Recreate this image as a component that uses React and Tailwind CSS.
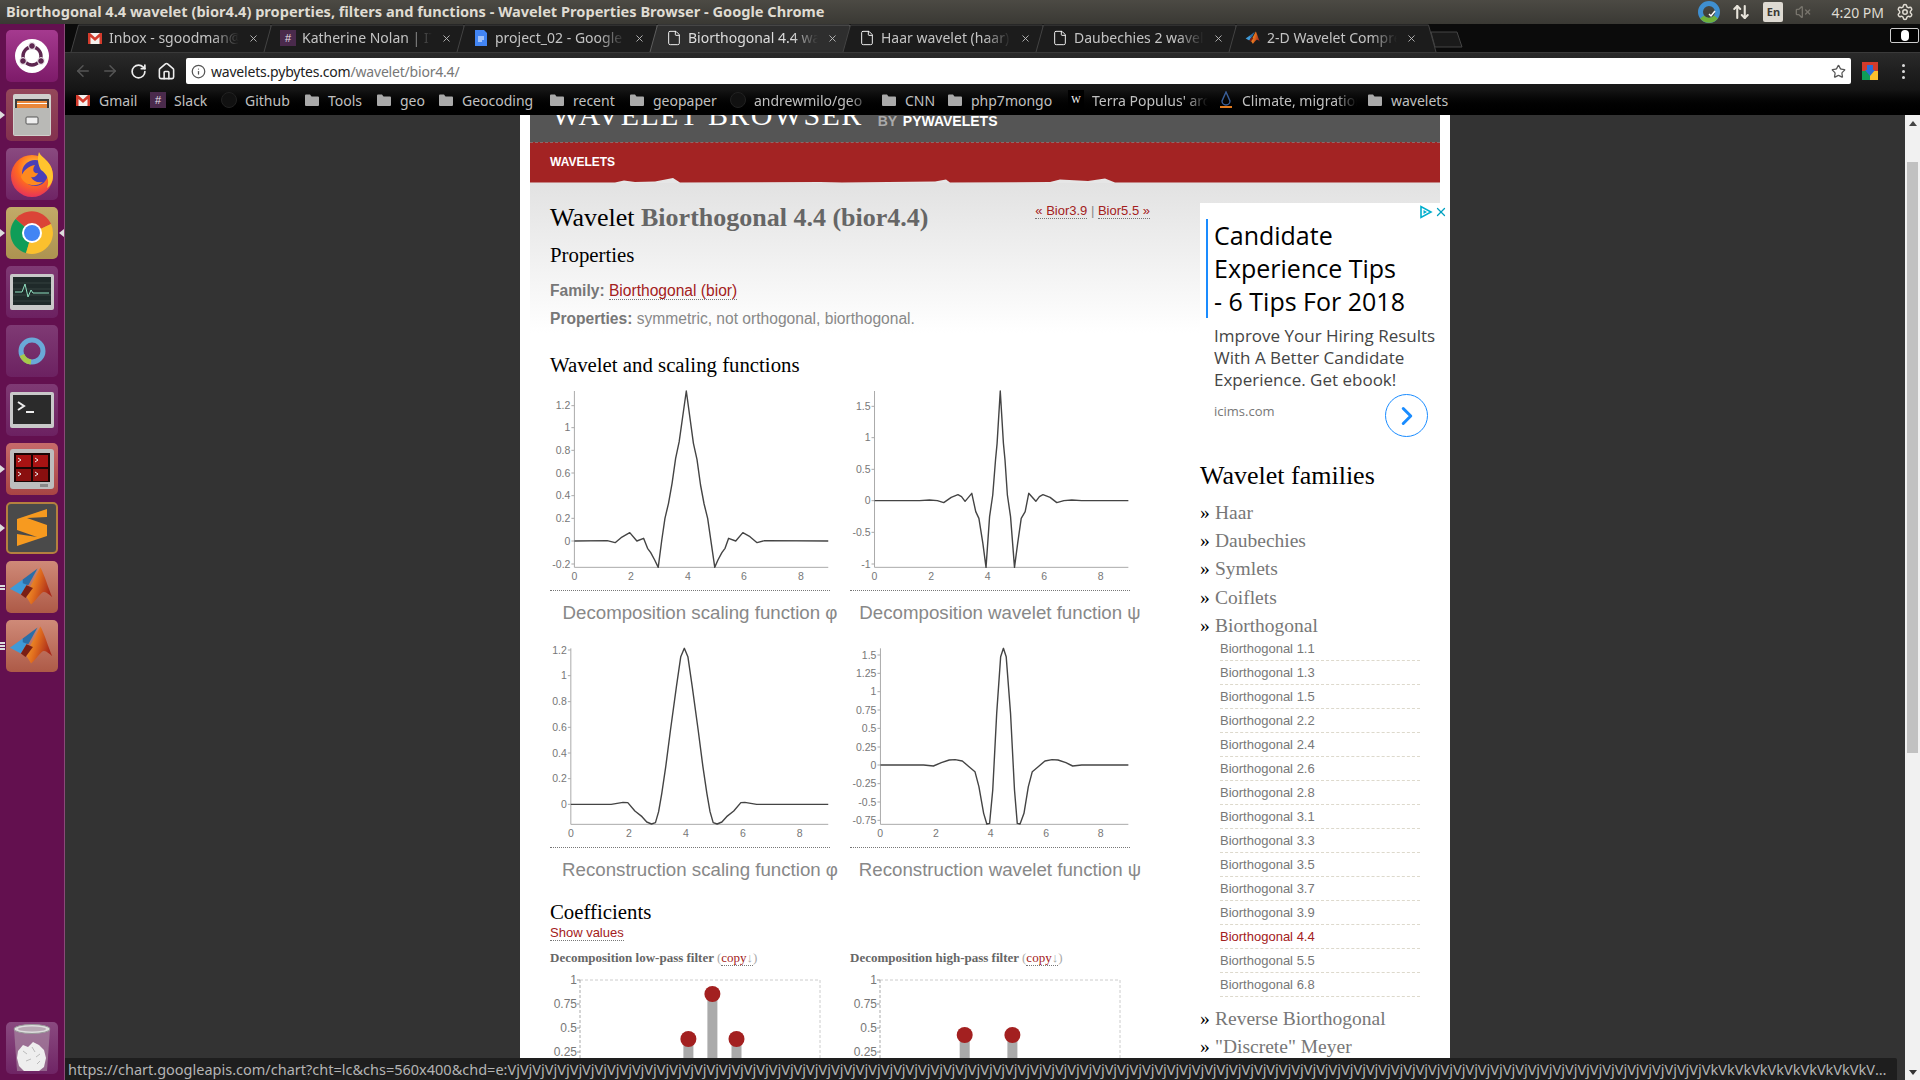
import { ArrowLeft, ArrowRight, RotateCw, Home, Info, Star, X, File, ChevronRight, VolumeX, ArrowUpDown, Settings } from 'lucide-react';

const UI = "font-['Noto_Sans',sans-serif]";

const TABS = [
  { title: 'Inbox - sgoodman@gmail.com', icon: 'gmail' },
  { title: 'Katherine Nolan | IT Recruiter', icon: 'slack' },
  { title: 'project_02 - Google Docs', icon: 'doc' },
  { title: 'Biorthogonal 4.4 wavelet (bior4.4)', icon: 'file', active: true },
  { title: 'Haar wavelet (haar)', icon: 'file' },
  { title: 'Daubechies 2 wavelet (db2)', icon: 'file' },
  { title: '2-D Wavelet Compression', icon: 'matlab' },
];

const BOOKMARKS = [
  { label: 'Gmail', icon: 'gmail', w: 'w-[75px]' },
  { label: 'Slack', icon: 'slack', w: 'w-[71px]' },
  { label: 'Github', icon: 'github', w: 'w-[83px]' },
  { label: 'Tools', icon: 'folder', w: 'w-[72px]' },
  { label: 'geo', icon: 'folder', w: 'w-[62px]' },
  { label: 'Geocoding', icon: 'folder', w: 'w-[111px]' },
  { label: 'recent', icon: 'folder', w: 'w-[80px]' },
  { label: 'geopaper', icon: 'folder', w: 'w-[101px]' },
  { label: 'andrewmilo/geo', icon: 'github', w: 'w-[151px]', fade: true },
  { label: 'CNN', icon: 'folder', w: 'w-[66px]' },
  { label: 'php7mongo', icon: 'folder', w: 'w-[121px]' },
  { label: "Terra Populus' archive", icon: 'w', w: 'w-[150px]', fade: true },
  { label: 'Climate, migration', icon: 'climate', w: 'w-[149px]', fade: true },
  { label: 'wavelets', icon: 'folder', w: 'w-[90px]' },
];

const SUB = ['1.1', '1.3', '1.5', '2.2', '2.4', '2.6', '2.8', '3.1', '3.3', '3.5', '3.7', '3.9', '4.4', '5.5', '6.8'];

// curves are read off the reference at zoom scale, Plot converts them
const CURVE_1 = [[87,483],[170,482],[190,488],[205,473],[227,458],[245,483],[262,475],[272,505],[280,518],[290,540],[299,562],[308,480],[316,415],[325,370],[334,310],[343,235],[352,185],[370,33],[388,190],[397,238],[406,315],[415,372],[424,415],[442,562],[450,540],[460,518],[468,505],[477,475],[495,483],[513,458],[531,470],[549,488],[568,482],[729,483]];
const CURVE_2 = [[846,362],[960,362],[985,360],[1005,362],[1021,368],[1040,352],[1057,344],[1066,350],[1075,364],[1092,340],[1102,395],[1110,415],[1120,490],[1128,562],[1137,410],[1145,345],[1152,240],[1156,190],[1164,33],[1172,190],[1176,240],[1182,345],[1190,410],[1200,562],[1208,490],[1217,415],[1227,395],[1236,340],[1254,364],[1263,350],[1272,344],[1290,352],[1307,368],[1325,362],[1345,360],[1370,362],[1488,362]];
const CURVE_3 = [[78,523],[180,523],[195,520],[210,517],[222,518],[240,543],[258,560],[270,576],[282,582],[292,578],[300,545],[308,490],[318,410],[330,300],[345,170],[356,80],[365,55],[374,80],[385,170],[400,300],[412,410],[422,490],[430,545],[438,578],[448,582],[460,576],[472,560],[490,543],[508,518],[518,517],[533,520],[548,523],[729,523]];
const CURVE_4 = [[861,405],[970,405],[995,408],[1015,398],[1035,390],[1050,389],[1068,393],[1085,410],[1100,425],[1110,470],[1122,550],[1130,582],[1137,580],[1145,480],[1155,250],[1165,80],[1172,55],[1179,80],[1190,250],[1200,480],[1207,580],[1214,582],[1224,550],[1235,470],[1245,425],[1260,410],[1277,393],[1295,389],[1310,390],[1330,398],[1347,408],[1370,405],[1488,405]];

function Plot({ offsetX, offsetY, h, axis, right, top, bottom, yTicks, xTicks, curve }) {
  const px = (z) => z / 2.529 - offsetX;
  const py = (z) => z / 3 - offsetY;
  return (
    <svg width="280" height={h} className="block font-['Liberation_Sans',sans-serif]">
      <polyline points={`${px(axis)},${py(top)} ${px(axis)},${py(bottom)} ${px(right)},${py(bottom)}`} fill="none" stroke="#aaa" />
      {yTicks.map(([label, z]) => (
        <g key={label}>
          <line x1={px(axis) - 3} x2={px(axis)} y1={py(z)} y2={py(z)} stroke="#aaa" />
          <text x={px(axis) - 4} y={py(z) + 3.5} fontSize="10.5" textAnchor="end" fill="#777">{label}</text>
        </g>
      ))}
      {xTicks.map(([label, z]) => (
        <text key={label} x={px(z)} y={py(bottom) + 13} fontSize="10.5" textAnchor="middle" fill="#777">{label}</text>
      ))}
      <polyline points={curve.map(([x, y]) => `${px(x)},${py(y)}`).join(' ')} fill="none" stroke="#444" strokeWidth="1.4" strokeLinejoin="round" />
    </svg>
  );
}

function Lollipops({ dots }) {
  return (
    <svg width="280" height="100" className="block font-['Liberation_Sans',sans-serif]">
      <path d="M30 10H270V100" fill="none" stroke="#ccc" strokeDasharray="3 2" />
      <path d="M30 10V100" fill="none" stroke="#aaa" strokeDasharray="3 2" />
      {[['1', 10], ['0.75', 34], ['0.5', 58], ['0.25', 82]].map(([label, y]) => (
        <g key={label}>
          <line x1="27" x2="30" y1={y} y2={y} stroke="#999" />
          <text x="27" y={y + 4} fontSize="12" textAnchor="end" fill="#777">{label}</text>
        </g>
      ))}
      {dots.map(([x, y]) => (
        <g key={x}>
          <rect x={x - 5} y={y} width="10" height={100 - y} fill="#aaa" />
          <circle cx={x} cy={y} r="8" fill="#a32020" />
        </g>
      ))}
    </svg>
  );
}

function Caption({ children, className }) {
  return <p className={`w-[300px] text-center text-[18.7px] leading-6 text-[#888] whitespace-nowrap ${className}`}>{children}</p>;
}

function FilterLabel({ children }) {
  return (
    <p className="font-['Liberation_Serif',serif] font-bold text-[13px] leading-4 text-[#666] whitespace-nowrap">
      {children} <span className="font-normal text-[#aaa]">(<span className="text-[#a32020] border-b border-dotted border-[#777]">copy<span className="text-[#aaa]">↓</span></span>)</span>
    </p>
  );
}

function Gmail() {
  return (
    <svg width="16" height="16" viewBox="0 0 16 16" className="shrink-0">
      <rect x="1" y="3" width="14" height="11" fill="#f4f1ee" />
      <path d="M1 3h2l5 4.5L13 3h2v11h-2.5V7L8 11 3.5 7v7H1z" fill="#d33b2c" />
    </svg>
  );
}

function SlackIcon() {
  return (
    <div className="w-4 h-4 shrink-0 bg-[#4a2a4c] flex items-center justify-center text-[11px] leading-none text-[#e8e0e8] font-['Liberation_Sans',sans-serif]">#</div>
  );
}

function DocIcon() {
  return (
    <svg width="16" height="16" viewBox="0 0 16 16" className="shrink-0">
      <path d="M2 0h9l3 3v13H2z" fill="#4285f4" />
      <path d="M5 7h6M5 9h6M5 11h4" stroke="#fff" />
    </svg>
  );
}

function Matlab({ size = 16 }) {
  return (
    <svg width={size} height={size} viewBox="0 0 52 52" className="shrink-0">
      <defs>
        <linearGradient id="mlOrange" x1="0" y1="0" x2="1" y2="0.4">
          <stop offset="0" stopColor="#f4b23a" />
          <stop offset="0.5" stopColor="#e2701f" />
          <stop offset="1" stopColor="#a8281a" />
        </linearGradient>
      </defs>
      <path d="M2 28l14-10 9-2-11 18z" fill="#3f9ad8" />
      <path d="M16 18L32 6 22 24l-6-2z" fill="#2a6ea8" />
      <path d="M24 26L35 5c4 6 9 24 13 32-5-4-8-8-12-4-5 5-7 9-11 12l-6-10z" fill="url(#mlOrange)" />
      <path d="M20 24l7 3-8 11-5-4z" fill="#7a1f15" />
    </svg>
  );
}

function Folder() {
  return (
    <svg width="16" height="16" viewBox="0 0 16 16" className="shrink-0">
      <path d="M1 3.5A1 1 0 0 1 2 2.5h4l1.5 2H14a1 1 0 0 1 1 1V13a1 1 0 0 1-1 1H2a1 1 0 0 1-1-1z" fill="#aaa" />
    </svg>
  );
}

function BookmarkIcon({ kind }) {
  if (kind === 'gmail') return <Gmail />;
  if (kind === 'slack') return <SlackIcon />;
  if (kind === 'folder') return <Folder />;
  if (kind === 'github') return <div className="w-4 h-4 shrink-0 rounded-full border border-[#222] bg-[#111]" />;
  if (kind === 'w') return <div className="w-4 h-5 shrink-0 bg-black text-[10px] leading-5 text-center text-white font-['Liberation_Serif',serif]">W</div>;
  return (
    <svg width="16" height="18" viewBox="0 0 16 18" className="shrink-0">
      <path d="M8 1L4 10a4 4 0 0 0 8 0z" fill="none" stroke="#3a5f9a" strokeWidth="1.4" />
      <path d="M2 16h12" stroke="#e07a1f" strokeWidth="2" />
    </svg>
  );
}

function Tab({ title, icon, active }) {
  return (
    <div className="relative w-[193px] h-[28px] shrink-0 flex items-center">
      <svg width="209" height="28" className="absolute left-0 top-0">
        <path d="M1 28L8.5 1H200.5L208 28" fill={active ? '#2e2e2e' : '#1c1c1c'} stroke={active ? '#5e5e5e' : '#444'} />
      </svg>
      <div className="relative flex items-center pl-[17px] w-full">
        {icon === 'file' && <File size={16} strokeWidth={1.4} color="#fff" className="shrink-0" />}
        {icon === 'gmail' && <Gmail />}
        {icon === 'slack' && <SlackIcon />}
        {icon === 'doc' && <DocIcon />}
        {icon === 'matlab' && <Matlab />}
        <span className={`ml-[6px] w-[130px] overflow-hidden whitespace-nowrap text-[14px] leading-5 [mask-image:linear-gradient(to_right,black_80%,transparent)] ${active ? 'text-[#ddd]' : 'text-[#c4c4c4]'}`}>{title}</span>
        <X size={11} strokeWidth={2} color="#bbb" className="ml-[9px] shrink-0" />
      </div>
    </div>
  );
}

function Tile({ className, pip, pipRight, children }) {
  return (
    <div className="relative h-[52px] pl-[6px]">
      {pip > 0 && (
        <div className="absolute left-0 top-0 h-full flex flex-col justify-center gap-[1px]">
          {pip === 1 ? (
            <div className="w-0 h-0 border-y-[4px] border-y-transparent border-l-[5px] border-l-[#ddd]" />
          ) : (
            [...Array(pip)].map((_, i) => <div key={i} className="w-[5px] h-[2px] bg-[#ddd]" />)
          )}
        </div>
      )}
      {pipRight && (
        <div className="absolute right-0 top-[22px] w-0 h-0 border-y-[4px] border-y-transparent border-r-[5px] border-r-[#ddd]" />
      )}
      <div className={`w-[52px] h-[52px] rounded-[5px] flex items-center justify-center ${className}`}>{children}</div>
    </div>
  );
}

function Launcher() {
  return (
    <div className="w-[65px] shrink-0 bg-[#63104f] border-r border-[#8a4a78] flex flex-col gap-[7px] pt-[6px] pb-[6px] overflow-hidden">
      <Tile className="bg-gradient-to-b from-[#a53a8f] to-[#7d1a69]">
        <svg width="36" height="36" viewBox="0 0 36 36">
          <circle cx="18" cy="18" r="17" fill="#fff" />
          <circle cx="18" cy="18" r="9" fill="none" stroke="#5e2750" strokeWidth="3.4" />
          <circle cx="18" cy="8" r="3.4" fill="#5e2750" stroke="#fff" />
          <circle cx="9" cy="23" r="3.4" fill="#5e2750" stroke="#fff" />
          <circle cx="27" cy="23" r="3.4" fill="#5e2750" stroke="#fff" />
        </svg>
      </Tile>
      <Tile pip={1} className="bg-gradient-to-b from-[#94485a] to-[#83314f]">
        <svg width="40" height="44" viewBox="0 0 40 44">
          <rect x="1" y="1" width="38" height="42" rx="2" fill="#d0d0cc" />
          <rect x="3" y="6" width="34" height="10" fill="#3c3c3c" />
          <rect x="5" y="8" width="30" height="7" fill="#e9873a" />
          <rect x="5" y="10" width="30" height="1" fill="#fff" />
          <rect x="2" y="15" width="36" height="27" fill="#b9b9b6" />
          <rect x="14" y="24" width="12" height="7" rx="1" fill="#eee" stroke="#555" />
        </svg>
      </Tile>
      <Tile className="bg-gradient-to-b from-[#8a4a80] to-[#6f2465]">
        <svg width="46" height="46" viewBox="0 0 46 46">
          <defs>
            <radialGradient id="fx" cx="0.55" cy="0.3" r="0.8">
              <stop offset="0" stopColor="#ffd23a" />
              <stop offset="0.5" stopColor="#ff6a1f" />
              <stop offset="1" stopColor="#e0226a" />
            </radialGradient>
          </defs>
          <circle cx="23" cy="25" r="21" fill="url(#fx)" />
          <circle cx="26" cy="22" r="13" fill="#4a3fb8" />
          <path d="M12 26c3 8 14 11 22 5-6 1-10-1-12-5 3 1 6-1 7-4-5 1-6-4-3-8-7 1-12 6-14 12z" fill="#ff8a1f" />
          <path d="M30 1c2 6 14 9 14 24 0 6-3 10-6 12 3-8 0-14-6-18-3-5-4-12-2-18z" fill="#ffc42e" />
        </svg>
      </Tile>
      <Tile pip={1} pipRight className="bg-gradient-to-b from-[#c2aa68] to-[#ad9350]">
        <svg width="44" height="44" viewBox="0 0 44 44">
          <path d="M22 22L5.5 8A21 21 0 0 1 41 13z" fill="#db4437" />
          <path d="M5.5 8A21 21 0 0 0 16 42l6-20z" fill="#0f9d58" />
          <path d="M41 13A21 21 0 0 1 16 42l6-20z" fill="#fbc02d" />
          <circle cx="22" cy="22" r="10" fill="#fff" />
          <circle cx="22" cy="22" r="8" fill="#4285f4" />
        </svg>
      </Tile>
      <Tile className="bg-gradient-to-b from-[#7f3a74] to-[#6c2161]">
        <svg width="46" height="38" viewBox="0 0 46 38">
          <rect x="1" y="1" width="44" height="36" rx="2" fill="#c9c9c9" />
          <rect x="4" y="4" width="38" height="28" fill="#1f2a2a" />
          <path d="M4 10h38M4 16h38M4 22h38M4 28h38" stroke="#34403f" />
          <path d="M6 19h7l3-8 3 13 3-7 2 3h16" fill="none" stroke="#8fe0c0" />
        </svg>
      </Tile>
      <Tile className="bg-gradient-to-b from-[#7f3a74] to-[#6c2161]">
        <svg width="30" height="30" viewBox="0 0 30 30">
          <circle cx="15" cy="15" r="11" fill="none" stroke="#6aa9d8" strokeWidth="5" />
          <path d="M5 19a11 11 0 0 0 9 7" fill="none" stroke="#a8c84a" strokeWidth="5" />
        </svg>
      </Tile>
      <Tile className="bg-gradient-to-b from-[#7f3a74] to-[#6c2161]">
        <svg width="46" height="38" viewBox="0 0 46 38">
          <rect x="1" y="1" width="44" height="36" rx="2" fill="#c9c9c9" />
          <rect x="4" y="4" width="38" height="29" fill="#2b2b2b" />
          <path d="M9 11l6 4-6 4" fill="none" stroke="#eee" strokeWidth="2" />
          <path d="M17 21h8" stroke="#eee" strokeWidth="2" />
        </svg>
      </Tile>
      <Tile pip={1} className="bg-gradient-to-b from-[#c76a6a] to-[#a84444]">
        <svg width="46" height="42" viewBox="0 0 46 42">
          <rect x="1" y="1" width="44" height="40" rx="3" fill="#bdbdbd" />
          <rect x="5" y="5" width="36" height="29" fill="#1a0505" />
          <rect x="7" y="7" width="15" height="12" fill="#a81313" />
          <rect x="24" y="7" width="15" height="12" fill="#a81313" />
          <rect x="7" y="21" width="15" height="12" fill="#8a0f0f" />
          <rect x="24" y="21" width="15" height="12" fill="#8a0f0f" />
          <path d="M9 10l3 2-3 2M26 10l3 2-3 2M9 24l3 2-3 2M26 24l3 2-3 2" fill="none" stroke="#eee" />
          <rect x="31" y="36" width="8" height="3" fill="#888" />
        </svg>
      </Tile>
      <Tile pip={1} className="bg-[#4a4a4a] border-2 border-[#b5803f]">
        <svg width="34" height="40" viewBox="0 0 34 40">
          <path d="M32 1L2 11v11l20 7L2 26v12l30-10V17L12 10l20-1z" fill="#f79a1f" />
        </svg>
      </Tile>
      <Tile pip={2} className="bg-gradient-to-b from-[#cf8a78] to-[#ad5a47]"><Matlab size={48} /></Tile>
      <Tile pip={3} className="bg-gradient-to-b from-[#cf8a78] to-[#ad5a47]"><Matlab size={48} /></Tile>
      <div className="mt-auto">
        <Tile className="bg-gradient-to-b from-[#8a4a80] to-[#6f2465]">
          <svg width="40" height="50" viewBox="0 0 40 50">
            <path d="M2 6l3 42h30l3-42z" fill="#b29aad" fillOpacity="0.55" />
            <path d="M6 28l5-6 5 2 5-5 6 3 5 5 2 8-2 9-5 4H12l-5-5-2-8z" fill="#eee" />
            <path d="M11 28l4 3M20 24l3 5M28 31l-4 3M14 38l5-2M25 41l3-3" stroke="#bbb" fill="none" />
            <ellipse cx="20" cy="6" rx="18" ry="4.5" fill="#ddd" stroke="#999" />
            <ellipse cx="20" cy="6" rx="14" ry="2.5" fill="#b8a8b4" />
          </svg>
        </Tile>
      </div>
    </div>
  );
}

function AdBox() {
  return (
    <div className="relative w-[250px] h-[250px] mt-5 bg-white font-['Open_Sans',sans-serif] overflow-hidden">
      <svg width="14" height="14" viewBox="0 0 14 14" className="absolute left-[219px] top-[2px]">
        <path d="M2 1.5v11L12 7z" fill="none" stroke="#00aecd" strokeWidth="1.6" />
        <path d="M4.5 5v4l3.5-2z" fill="#00aecd" />
      </svg>
      <X size={14} strokeWidth={2.2} color="#00a0c0" className="absolute left-[234px] top-[2px]" />
      <div className="ml-[6px] mt-4 pl-[6px] border-l-2 border-[#1a8cff] text-[25px] leading-[33px] text-black whitespace-nowrap">
        Candidate<br />Experience Tips<br />- 6 Tips For 2018
      </div>
      <p className="ml-[14px] mt-[7px] text-[17px] leading-[22px] text-[#444] whitespace-nowrap">
        Improve Your Hiring Results<br />With A Better Candidate<br />Experience. Get ebook!
      </p>
      <p className="ml-[14px] mt-[11px] text-[13px] leading-[18px] text-[#777]">icims.com</p>
      <div className="absolute left-[185px] top-[191px] w-[43px] h-[43px] rounded-full border border-[#1a8cff] flex items-center justify-center">
        <ChevronRight size={30} strokeWidth={2.4} color="#1a8cff" />
      </div>
    </div>
  );
}

function Family({ name, className = 'h-[28.2px]' }) {
  return (
    <li className={`flex text-[19.5px] leading-7 whitespace-nowrap ${className}`}>
      <span className="w-[15px] text-black shrink-0">»</span>
      <span className="text-[#777]">{name}</span>
    </li>
  );
}

function Sidebar() {
  return (
    <div className="w-[250px] shrink-0 ml-[50px] font-['Liberation_Serif',serif]">
      <AdBox />
      <h3 className="mt-2 text-[26px] leading-[30px] text-black">Wavelet families</h3>
      <ul className="mt-2">
        {['Haar', 'Daubechies', 'Symlets', 'Coiflets'].map((n) => <Family key={n} name={n} />)}
        <Family name="Biorthogonal" className="h-[25px]" />
      </ul>
      <ul className="ml-5 w-[200px] font-['Liberation_Sans',sans-serif] text-[13px]">
        {SUB.map((v) => (
          <li key={v} className={`h-6 flex items-center border-b border-dashed border-[#ddd9cc] ${v === '4.4' ? 'text-[#a32020]' : 'text-[#777]'}`}>
            Biorthogonal {v}
          </li>
        ))}
      </ul>
      <ul className="mt-2">
        <Family name="Reverse Biorthogonal" />
        <Family name={'"Discrete" Meyer'} />
        <Family name="Gaussian" />
      </ul>
    </div>
  );
}

function MainColumn() {
  return (
    <div className="w-[600px] shrink-0 ml-5 font-['Liberation_Sans',sans-serif]">
      <div className="flex justify-between items-start">
        <h1 className="mt-5 font-['Liberation_Serif',serif] text-[26px] leading-[30px] text-black whitespace-nowrap">
          Wavelet <b className="text-[#666]">Biorthogonal 4.4 (bior4.4)</b>
        </h1>
        <p className="mt-5 text-[13px] leading-4 text-[#888] whitespace-nowrap">
          <span className="text-[#a32020] border-b border-dotted border-[#777]">« Bior3.9</span> | <span className="text-[#a32020] border-b border-dotted border-[#777]">Bior5.5 »</span>
        </p>
      </div>
      <h2 className="mt-[10px] font-['Liberation_Serif',serif] text-[20.8px] leading-6 text-black">Properties</h2>
      <p className="mt-[14px] text-[15.6px] leading-5 text-[#777]">
        <b>Family:</b> <span className="text-[#a32020] border-b border-dotted border-[#777]">Biorthogonal (bior)</span>
      </p>
      <p className="mt-2 text-[15.6px] leading-5 text-[#888]">
        <b className="text-[#777]">Properties:</b> symmetric, not orthogonal, biorthogonal.
      </p>
      <h2 className="mt-6 font-['Liberation_Serif',serif] text-[20.8px] leading-6 text-black">Wavelet and scaling functions</h2>

      <div className="mt-2 grid grid-cols-[280px_280px] gap-x-5">
        <div className="border-b border-dotted border-[#777]">
          <Plot offsetX={10} offsetY={5} h={205} axis={87} right={729} top={33} bottom={562} curve={CURVE_1}
            yTicks={[['1.2', 77], ['1', 143], ['0.8', 211], ['0.6', 279], ['0.4', 347], ['0.2', 415], ['0', 483], ['-0.2', 552]]}
            xTicks={[['0', 87], ['2', 230], ['4', 374], ['6', 516], ['8', 660]]} />
        </div>
        <div className="border-b border-dotted border-[#777]">
          <Plot offsetX={310} offsetY={5} h={205} axis={846} right={1488} top={33} bottom={562} curve={CURVE_2}
            yTicks={[['1.5', 79], ['1', 173], ['0.5', 268], ['0', 362], ['-0.5', 457], ['-1', 552]]}
            xTicks={[['0', 846], ['2', 989], ['4', 1132], ['6', 1275], ['8', 1418]]} />
        </div>
        <Caption className="mt-[10px]">Decomposition scaling function φ</Caption>
        <Caption className="mt-[10px]">Decomposition wavelet function ψ</Caption>
      </div>

      <div className="mt-[15px] grid grid-cols-[280px_280px] gap-x-5">
        <div className="border-b border-dotted border-[#777]">
          <Plot offsetX={10} offsetY={10} h={207} axis={78} right={729} top={55} bottom={583} curve={CURVE_3}
            yTicks={[['1.2', 60], ['1', 137], ['0.8', 215], ['0.6', 292], ['0.4', 369], ['0.2', 446], ['0', 523]]}
            xTicks={[['0', 78], ['2', 225], ['4', 369], ['6', 513], ['8', 657]]} />
        </div>
        <div className="border-b border-dotted border-[#777]">
          <Plot offsetX={310} offsetY={10} h={207} axis={861} right={1488} top={55} bottom={583} curve={CURVE_4}
            yTicks={[['1.5', 75], ['1.25', 130], ['1', 185], ['0.75', 240], ['0.5', 295], ['0.25', 351], ['0', 405], ['-0.25', 461], ['-0.5', 516], ['-0.75', 571]]}
            xTicks={[['0', 860], ['2', 1001], ['4', 1140], ['6', 1280], ['8', 1418]]} />
        </div>
        <Caption className="mt-[10px]">Reconstruction scaling function φ</Caption>
        <Caption className="mt-[10px]">Reconstruction wavelet function ψ</Caption>
      </div>

      <h2 className="mt-[18px] font-['Liberation_Serif',serif] text-[20.8px] leading-6 text-black">Coefficients</h2>
      <p className="mt-px text-[13px] leading-4"><span className="text-[#a32020] border-b border-dotted border-[#777]">Show values</span></p>
      <div className="mt-[9px] grid grid-cols-[280px_280px] gap-x-5">
        <FilterLabel>Decomposition low-pass filter</FilterLabel>
        <FilterLabel>Decomposition high-pass filter</FilterLabel>
        <div className="mt-1"><Lollipops dots={[[138.4, 69], [162.4, 24], [186.5, 69]]} /></div>
        <div className="mt-1"><Lollipops dots={[[114.7, 65], [162.4, 65]]} /></div>
      </div>
    </div>
  );
}

export default function App() {
  return (
    <div className={`w-[1920px] h-[1080px] flex flex-col overflow-hidden ${UI}`}>
      {/* window title + indicators */}
      <div className="h-6 shrink-0 flex items-center pl-[6px] bg-gradient-to-b from-[#4c4a44] to-[#3a3934] text-[#dfdbd2]">
        <span className="text-[14.6px] font-bold whitespace-nowrap">Biorthogonal 4.4 wavelet (bior4.4) properties, filters and functions - Wavelet Properties Browser - Google Chrome</span>
        <div className="ml-auto flex items-center pr-[6px]">
          <svg width="24" height="24" viewBox="0 0 24 24">
            <circle cx="12" cy="12" r="8.5" fill="none" stroke="#3f8fd0" strokeWidth="5" />
            <path d="M5 17a9 9 0 0 0 14 0" fill="none" stroke="#6fb13a" strokeWidth="5" />
            <path d="M12 14l2 2 4-5" fill="none" stroke="#fff" strokeWidth="1.5" />
          </svg>
          <ArrowUpDown size={18} className="ml-[11px]" color="#e8e4db" strokeWidth={2.8} />
          <div className="ml-[13px] w-5 h-5 rounded-[2px] bg-[#dedad2] text-[#3a3934] text-[11px] leading-5 text-center font-bold">En</div>
          <VolumeX size={16} className="ml-[12px]" color="#77746c" />
          <span className="ml-[20px] text-[14px] whitespace-nowrap">4:20 PM</span>
          <Settings size={18} className="ml-[12px]" color="#dfdbd2" />
        </div>
      </div>

      <div className="flex flex-1 min-h-0">
        <Launcher />
        <div className="flex-1 min-w-0 flex flex-col">
          {/* tab strip */}
          <div className="h-7 shrink-0 bg-[#0b0b0b] flex pl-[5px] relative">
            {TABS.map((t) => <Tab key={t.title} {...t} />)}
            <svg width="34" height="18" className="ml-[9px] mt-[7px] shrink-0">
              <path d="M1 1H27L32 16H5z" fill="#1a1a1a" stroke="#444" />
            </svg>
            <div className="absolute right-[1px] top-[4px] w-[29px] h-[15px] rounded-[2px] border border-[#ccc] bg-black flex items-center justify-center">
              <div className="w-[8px] h-[11px] rounded-full bg-white" />
            </div>
          </div>
          {/* toolbar */}
          <div className="h-[38px] shrink-0 bg-gradient-to-b from-[#2a2a2a] to-[#151515] flex items-center pb-px border-t border-[#3a3a3a]">
            <ArrowLeft size={18} color="#555" className="ml-[9px]" />
            <ArrowRight size={18} color="#555" className="ml-[9px]" />
            <RotateCw size={17} color="#eee" strokeWidth={2.4} className="ml-[11px]" />
            <Home size={19} color="#eee" strokeWidth={2} className="ml-[10px]" />
            <div className="ml-[10px] w-[1665px] h-[26px] bg-white rounded-[2px] flex items-center pl-[5px] pr-[5px]">
              <Info size={15} color="#555" />
              <span className="ml-[5px] text-[14px] text-[#222] tracking-[-0.2px]">wavelets.pybytes.com<span className="text-[#777]">/wavelet/bior4.4/</span></span>
              <Star size={15} color="#555" className="ml-auto" />
            </div>
            <svg width="16" height="18" viewBox="0 0 16 18" className="ml-[11px]">
              <rect width="16" height="18" fill="#d33b2c" />
              <path d="M0 9h8v9H0z" fill="#0f9d58" />
              <path d="M8 9h8v9H8z" fill="#fbc02d" />
              <path d="M5 3h6v5h2l-5 6-5-6h2z" fill="#2a6ed8" />
            </svg>
            <div className="ml-[24px] flex flex-col gap-[3px]">
              <div className="w-[3px] h-[3px] rounded-full bg-[#ddd]" />
              <div className="w-[3px] h-[3px] rounded-full bg-[#ddd]" />
              <div className="w-[3px] h-[3px] rounded-full bg-[#ddd]" />
            </div>
          </div>
          {/* bookmarks */}
          <div className="h-[25px] shrink-0 bg-gradient-to-b from-[#141414] to-black flex items-center pb-[5px] pl-[10px] text-[14px] text-[#c0c0c0]">
            {BOOKMARKS.map((b) => (
              <div key={b.label} className={`${b.w} shrink-0 flex items-center gap-2 overflow-hidden`}>
                <BookmarkIcon kind={b.icon} />
                <span className={`whitespace-nowrap ${b.fade ? 'overflow-hidden w-full [mask-image:linear-gradient(to_right,black_75%,transparent_92%)]' : ''}`}>{b.label}</span>
              </div>
            ))}
          </div>

          {/* page */}
          <div className="relative flex-1 min-h-0 flex bg-[#333] overflow-hidden">
            <div className="flex-1 min-w-0">
              <div className="ml-[455px] w-[930px] h-[965px] bg-white px-[10px] overflow-hidden">
                <div className="h-[27px] bg-[#555] overflow-hidden flex items-end pl-[22px] pb-[13px] whitespace-nowrap">
                  <span className="font-['Liberation_Serif',serif] text-[30px] leading-[28px] text-white tracking-[1.4px]">WAVELET BROWSER</span>
                  <span className="ml-[15px] font-['Liberation_Sans',sans-serif] font-bold text-[14px] leading-4 text-[#aaa]">BY <span className="ml-[2px] text-white">PYWAVELETS</span></span>
                </div>
                <div className="relative h-[41px] bg-[#a32323] border-t border-dashed border-[#8a6a6a] flex items-center pb-[2px] pl-5 font-['Liberation_Sans',sans-serif] font-bold text-[12px] text-white">
                  WAVELETS
                  <svg width="910" height="6" className="absolute left-0 bottom-0">
                    <path d="M0 6V5.5L85 5.5L94 3.5L105 5L125 4.5L143 1L150 5.5L290 5L312 5.5L405 4.5L416 2.5L420 5.5L520 5L530 2.5L558 4L575 1.5L585 5.5L910 5.5V6Z" fill="#e6e6e6" />
                  </svg>
                </div>
                <div className="flex bg-[linear-gradient(to_bottom,#e2e2e2,#ffffff_150px)] h-[900px]">
                  <MainColumn />
                  <Sidebar />
                </div>
              </div>
            </div>
            {/* scrollbar */}
            <div className="w-[15px] shrink-0 bg-[#f1f1f1] flex flex-col items-center">
              <div className="mt-[6px] w-0 h-0 border-x-[4px] border-x-transparent border-b-[5px] border-b-[#444]" />
              <div className="mt-[36px] w-[11px] h-[591px] bg-[#c1c1c1]" />
              <div className="mt-auto mb-[5px] w-0 h-0 border-x-[4px] border-x-transparent border-t-[5px] border-t-[#333]" />
            </div>
            {/* hover status bubble */}
            <div className="absolute left-0 bottom-0 w-[1832px] h-[22px] bg-[#1e1e1e] rounded-tr-[2px] pl-[3px] pr-[8px] text-[14.5px] leading-[22px] text-[#b4b4b4] whitespace-nowrap overflow-hidden text-ellipsis">
              {'https://chart.googleapis.com/chart?cht=lc&chs=560x400&chd=e:' + 'Vj'.repeat(96) + 'Vk'.repeat(24)}
            </div>
          </div>
        </div>
      </div>
    </div>
  );
}
